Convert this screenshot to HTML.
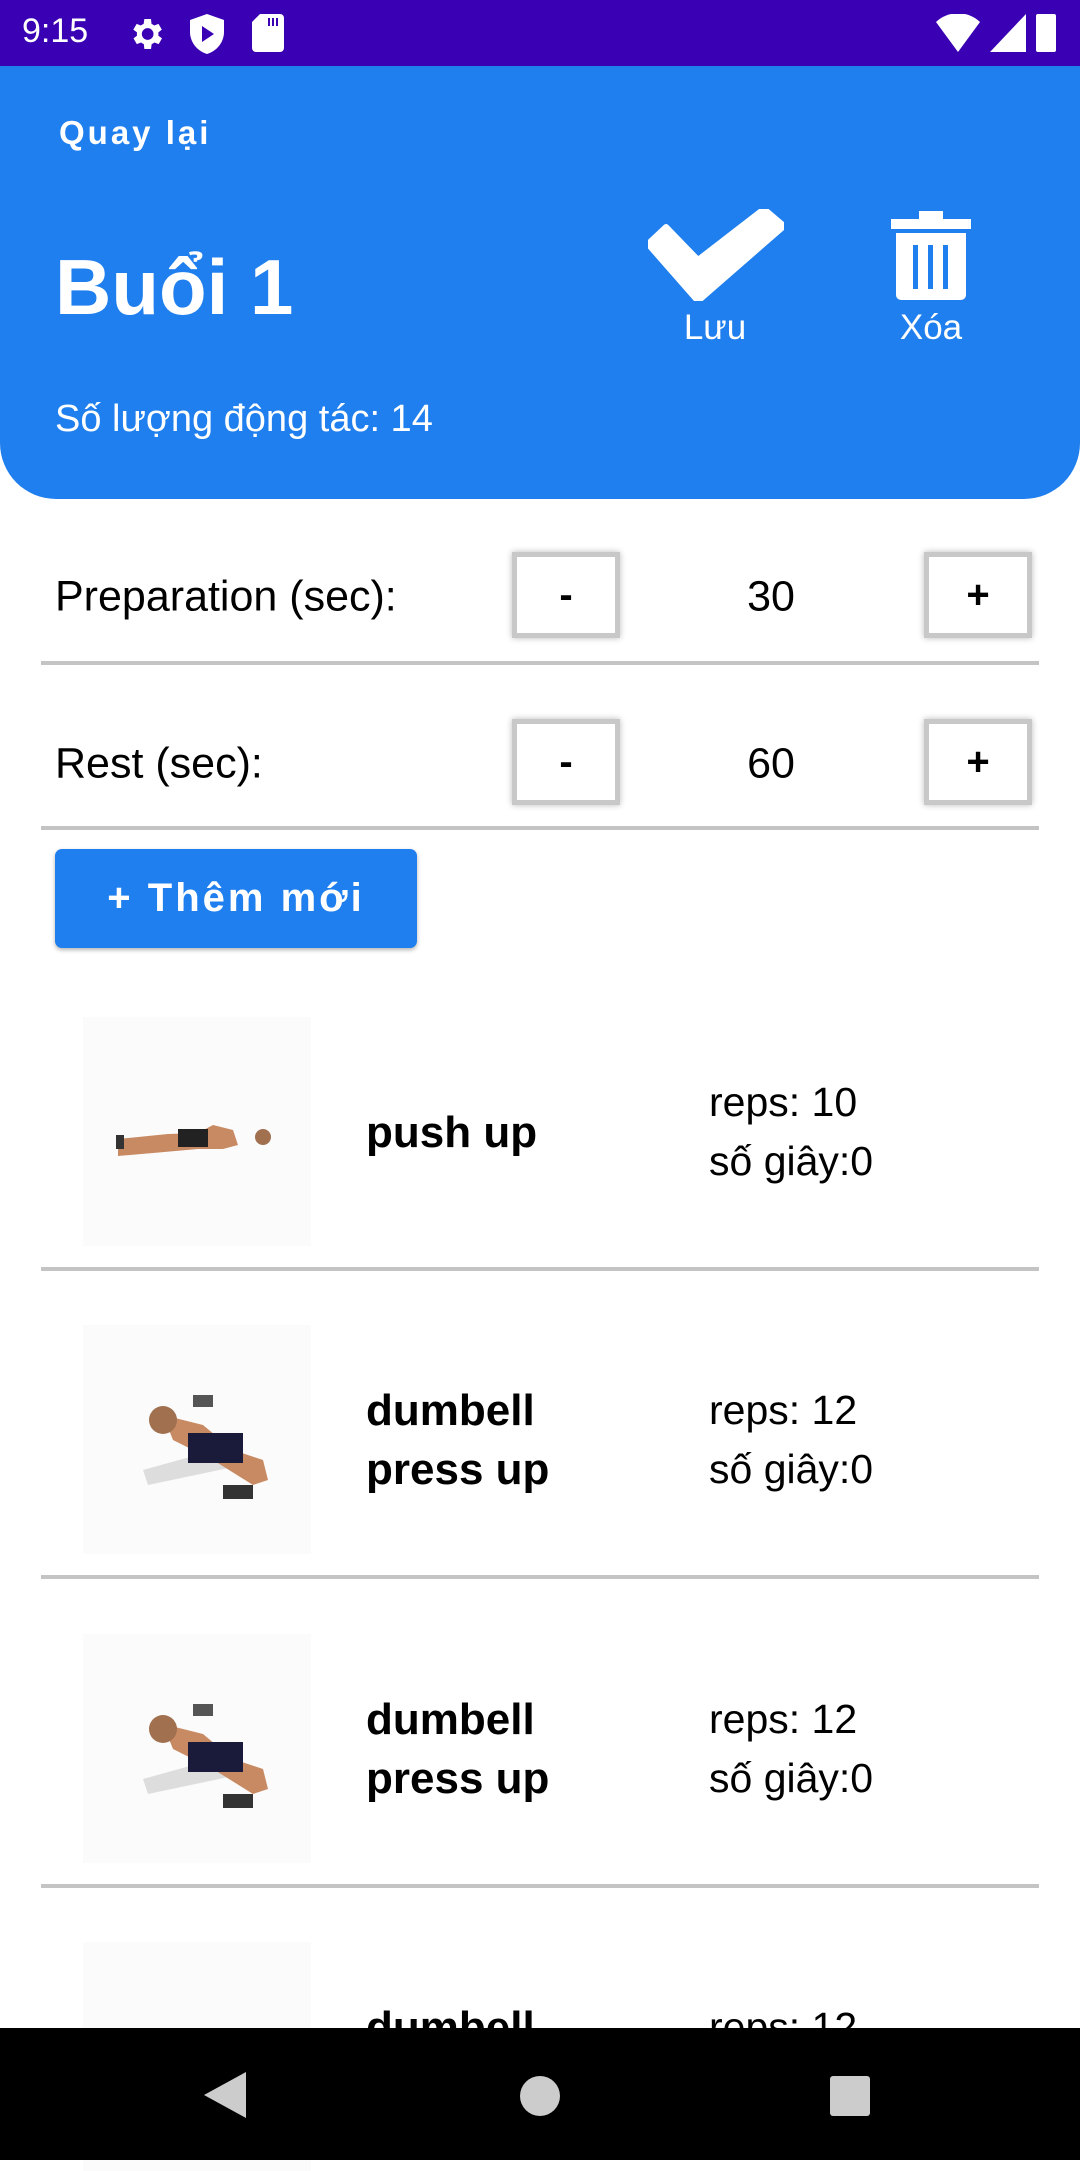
<!DOCTYPE html>
<html><head><meta charset="utf-8"><style>
*{margin:0;padding:0;box-sizing:border-box}
body{width:1080px;height:2160px;overflow:hidden;background:#fff;font-family:"Liberation Sans",sans-serif;position:relative;color:#000}
.abs{position:absolute}
.sb{left:0;top:0;width:1080px;height:66px;background:#3a00b4;color:#fff}
.hdr{left:0;top:66px;width:1080px;height:433px;background:#1f7fee;border-radius:0 0 56px 56px;color:#fff}
.box{width:108px;height:86px;background:#fff;border:5px solid #c8c8c8;box-shadow:0 0 6px #bbb;font-weight:bold;font-size:40px;display:flex;align-items:center;justify-content:center}
.div{left:41px;width:998px;height:4px;background:#c4c4c4}
.lbl{font-size:43px;transform:translateY(-50%)}
.img{width:228px;height:229px;background:#fbfbfb}
.name{font-size:44px;font-weight:bold;line-height:59px}
.reps{font-size:41px;line-height:59px}
</style></head><body>
<div class="abs sb">
<div class="abs" style="left:22px;top:12px;font-size:34px">9:15</div>
<svg class="abs" style="left:126px;top:14px" width="40" height="40" viewBox="0 0 24 24"><path fill="#fff" d="M19.4 13a7 7 0 000-2l2.1-1.6-2-3.5-2.5 1a7 7 0 00-1.7-1L15 3h-4l-.4 2.9a7 7 0 00-1.7 1l-2.5-1-2 3.5L6.6 11a7 7 0 000 2l-2.1 1.6 2 3.5 2.5-1a7 7 0 001.7 1L11 21h4l.4-2.9a7 7 0 001.7-1l2.5 1 2-3.5zM13 15.5a3.5 3.5 0 110-7 3.5 3.5 0 010 7z"/></svg>
<svg class="abs" style="left:190px;top:14px" width="34" height="40" viewBox="0 0 17 20"><path fill="#fff" d="M8.5 0L0 3v6c0 5 3.6 9.6 8.5 11 4.9-1.4 8.5-6 8.5-11V3z"/><path fill="#3a00b4" d="M6 6v8l6-4z"/></svg>
<svg class="abs" style="left:252px;top:14px" width="32" height="38" viewBox="0 0 16 19"><path fill="#fff" d="M4 0h10a2 2 0 012 2v15a2 2 0 01-2 2H2a2 2 0 01-2-2V4z"/><path fill="#3a00b4" d="M8 2h1v4H8zm2 0h1v4h-1zm2 0h1v4h-1z"/></svg>
<svg class="abs" style="left:936px;top:14px" width="44" height="38" viewBox="0 0 22 19"><path fill="#fff" d="M0 4a16 16 0 0122 0L11 19z"/></svg>
<svg class="abs" style="left:990px;top:14px" width="36" height="38" viewBox="0 0 18 19"><path fill="#fff" d="M18 0v19H0z"/></svg>
<div class="abs" style="left:1036px;top:14px;width:20px;height:38px;background:#fff;border-radius:2px"></div>
</div>
<div class="abs hdr">
<div class="abs" style="left:59px;top:48px;font-size:33px;letter-spacing:3px;font-weight:bold">Quay lại</div>
<div class="abs" style="left:55px;top:176px;font-size:78px;font-weight:bold">Buổi 1</div>
<svg class="abs" style="left:648px;top:143px" width="136" height="92" viewBox="0 0 136 92"><path fill="#fff" d="M0 35l18-17 32 33L116 0l20 17-86 75z" stroke="#fff" stroke-linejoin="round" stroke-width="6"/></svg>
<div class="abs" style="left:655px;top:242px;width:120px;text-align:center;font-size:35px">Lưu</div>
<svg class="abs" style="left:891px;top:145px" width="80" height="89" viewBox="0 0 80 89"><rect x="0" y="8" width="80" height="10" fill="#fff"/><rect x="28" y="0" width="24" height="10" fill="#fff"/><path fill="#fff" d="M5 22h70v62a5 5 0 01-5 5H10a5 5 0 01-5-5z"/><rect x="22" y="34" width="5" height="44" fill="#1f7fee"/><rect x="37" y="34" width="5" height="44" fill="#1f7fee"/><rect x="52" y="34" width="5" height="44" fill="#1f7fee"/></svg>
<div class="abs" style="left:871px;top:242px;width:120px;text-align:center;font-size:35px">Xóa</div>
<div class="abs" style="left:55px;top:332px;font-size:38px">Số lượng động tác: 14</div>
</div>

<div class="abs lbl" style="left:55px;top:597px">Preparation (sec):</div>
<div class="abs box" style="left:512px;top:552px">-</div>
<div class="abs lbl" style="left:771px;top:597px;transform:translate(-50%,-50%)">30</div>
<div class="abs box" style="left:924px;top:552px">+</div>
<div class="abs div" style="top:661px"></div>

<div class="abs lbl" style="left:55px;top:764px">Rest (sec):</div>
<div class="abs box" style="left:512px;top:719px">-</div>
<div class="abs lbl" style="left:771px;top:764px;transform:translate(-50%,-50%)">60</div>
<div class="abs box" style="left:924px;top:719px">+</div>
<div class="abs div" style="top:826px"></div>

<div class="abs" style="left:55px;top:849px;width:362px;height:99px;background:#1f7fee;border-radius:7px;box-shadow:0 2px 4px rgba(0,0,0,.3);color:#fff;font-size:40px;font-weight:bold;letter-spacing:3px;display:flex;align-items:center;justify-content:center">+ Thêm mới</div>

<!-- item 1 -->
<div class="abs img" style="left:83px;top:1017px">
<svg width="228" height="229" viewBox="0 0 228 229"><path d="M35 122l50-5 30-1 15-8 20 5 5 15-15 4-25 0-45 4-35 3z" fill="#c88a62"/><rect x="95" y="112" width="30" height="18" fill="#222"/><rect x="33" y="118" width="8" height="14" fill="#333"/><circle cx="180" cy="120" r="8" fill="#a0704f"/></svg></div>
<div class="abs name" style="left:366px;top:1103px">push up</div>
<div class="abs reps" style="left:709px;top:1073px">reps: 10<br>số giây:0</div>
<div class="abs div" style="top:1267px"></div>

<!-- item 2 -->
<div class="abs img" style="left:83px;top:1325px">
<svg width="228" height="229" viewBox="0 0 228 229"><path d="M60 145l90-25 10 20-95 20z" fill="#ddd"/><path d="M80 90l40 10 30 25 30 10 5 20-15 5-40-25-40-20z" fill="#c88a62"/><rect x="105" y="108" width="55" height="30" fill="#1a1a3a"/><circle cx="80" cy="95" r="14" fill="#a0704f"/><rect x="110" y="70" width="20" height="12" fill="#555"/><rect x="140" y="160" width="30" height="14" fill="#333"/></svg></div>
<div class="abs name" style="left:366px;top:1381px">dumbell<br>press up</div>
<div class="abs reps" style="left:709px;top:1381px">reps: 12<br>số giây:0</div>
<div class="abs div" style="top:1575px"></div>

<!-- item 3 -->
<div class="abs img" style="left:83px;top:1634px">
<svg width="228" height="229" viewBox="0 0 228 229"><path d="M60 145l90-25 10 20-95 20z" fill="#ddd"/><path d="M80 90l40 10 30 25 30 10 5 20-15 5-40-25-40-20z" fill="#c88a62"/><rect x="105" y="108" width="55" height="30" fill="#1a1a3a"/><circle cx="80" cy="95" r="14" fill="#a0704f"/><rect x="110" y="70" width="20" height="12" fill="#555"/><rect x="140" y="160" width="30" height="14" fill="#333"/></svg></div>
<div class="abs name" style="left:366px;top:1690px">dumbell<br>press up</div>
<div class="abs reps" style="left:709px;top:1690px">reps: 12<br>số giây:0</div>
<div class="abs div" style="top:1884px"></div>

<!-- item 4 -->
<div class="abs img" style="left:83px;top:1942px"></div>
<div class="abs name" style="left:366px;top:1998px">dumbell</div>
<div class="abs reps" style="left:709px;top:1998px">reps: 12</div>

<div class="abs" style="left:0;top:2028px;width:1080px;height:132px;background:#000">
<svg class="abs" style="left:204px;top:44px" width="42" height="46" viewBox="0 0 42 46"><path d="M0 23L42 0v46z" fill="#ccc"/></svg>
<div class="abs" style="left:520px;top:48px;width:40px;height:40px;border-radius:50%;background:#ccc"></div>
<div class="abs" style="left:830px;top:48px;width:40px;height:40px;border-radius:3px;background:#ccc"></div>
</div>
</body></html>
